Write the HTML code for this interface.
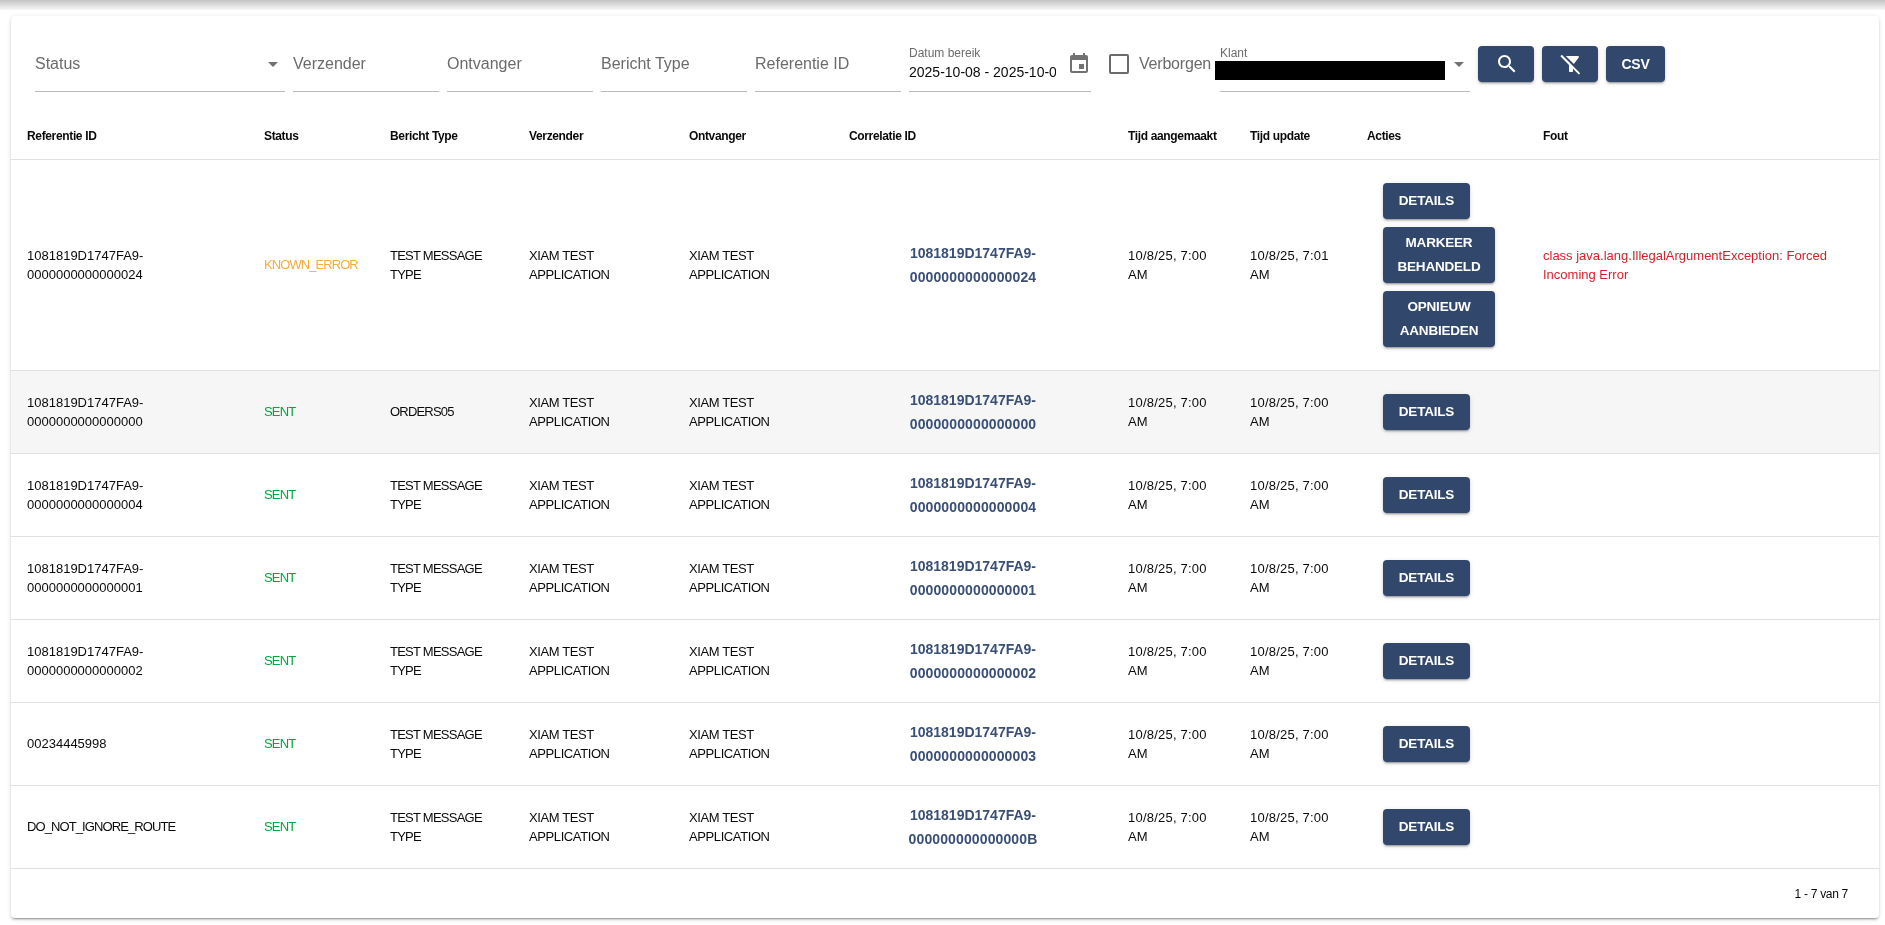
<!DOCTYPE html>
<html><head><meta charset="utf-8">
<style>
html,body{margin:0;padding:0;width:1885px;height:925px;overflow:hidden;background:#fff;font-family:"Liberation Sans",sans-serif;position:relative;}
#topsh{position:absolute;left:0;top:0;width:1885px;height:10px;background:linear-gradient(#c4c4c4,#f7f7f7);}
#card{position:absolute;left:11px;top:16px;width:1868px;height:902px;background:#fff;border-radius:4px;box-shadow:0 3px 1px -2px rgba(0,0,0,.2),0 2px 2px 0 rgba(0,0,0,.14),0 1px 5px 0 rgba(0,0,0,.12);}
.t{position:absolute;white-space:nowrap;will-change:transform;}
.row{position:absolute;left:11px;width:1868px;border-bottom:1px solid #e0e0e0;}
.hl{position:absolute;left:11px;width:1868px;height:1px;background:#e0e0e0;}
.ul{position:absolute;height:1px;background:#bababa;}
.btn{position:absolute;background:#32476c;border-radius:4px;box-shadow:0 3px 1px -2px rgba(0,0,0,.2),0 2px 2px 0 rgba(0,0,0,.14),0 1px 5px 0 rgba(0,0,0,.12);}
.ico{position:absolute;}
.arrow{position:absolute;width:0;height:0;border-left:5px solid transparent;border-right:5px solid transparent;border-top:5px solid #717171;}
.cb{position:absolute;width:16px;height:16px;border:2px solid #6b6b6b;border-radius:2px;}
</style></head><body>
<div id="topsh"></div>
<div id="card"></div>
<div class="row" style="top:160px;height:210px;background:transparent"></div>
<div class="t" style="left:27px;top:247.50px;font-size:13px;line-height:16px;color:#0a0a0a;font-weight:400;letter-spacing:0px;">1081819D1747FA9-</div>
<div class="t" style="left:27px;top:266.50px;font-size:13px;line-height:16px;color:#0a0a0a;font-weight:400;letter-spacing:0px;">0000000000000024</div>
<div class="t" style="left:264px;top:256.50px;font-size:13px;line-height:16px;color:#f5ac3d;font-weight:400;letter-spacing:-0.93px;">KNOWN_ERROR</div>
<div class="t" style="left:390px;top:247.50px;font-size:13px;line-height:16px;color:#0a0a0a;font-weight:400;letter-spacing:-0.75px;">TEST MESSAGE</div>
<div class="t" style="left:390px;top:266.50px;font-size:13px;line-height:16px;color:#0a0a0a;font-weight:400;letter-spacing:-0.75px;">TYPE</div>
<div class="t" style="left:529px;top:247.50px;font-size:13px;line-height:16px;color:#0a0a0a;font-weight:400;letter-spacing:-0.4px;">XIAM TEST</div>
<div class="t" style="left:529px;top:266.50px;font-size:13px;line-height:16px;color:#0a0a0a;font-weight:400;letter-spacing:-0.4px;">APPLICATION</div>
<div class="t" style="left:689px;top:247.50px;font-size:13px;line-height:16px;color:#0a0a0a;font-weight:400;letter-spacing:-0.4px;">XIAM TEST</div>
<div class="t" style="left:689px;top:266.50px;font-size:13px;line-height:16px;color:#0a0a0a;font-weight:400;letter-spacing:-0.4px;">APPLICATION</div>
<div class="t" style="left:872.5px;top:241.15px;font-size:14px;line-height:24px;color:#3a4f76;font-weight:700;letter-spacing:0px;width:200px;text-align:center;letter-spacing:0">1081819D1747FA9-</div>
<div class="t" style="left:872.5px;top:265.15px;font-size:14px;line-height:24px;color:#3a4f76;font-weight:700;letter-spacing:0px;width:200px;text-align:center;letter-spacing:0.12px">0000000000000024</div>
<div class="t" style="left:1127.5px;top:247.50px;font-size:13px;line-height:16px;color:#0a0a0a;font-weight:400;letter-spacing:0.22px;">10/8/25, 7:00</div>
<div class="t" style="left:1127.5px;top:266.50px;font-size:13px;line-height:16px;color:#0a0a0a;font-weight:400;letter-spacing:0px;">AM</div>
<div class="t" style="left:1249.5px;top:247.50px;font-size:13px;line-height:16px;color:#0a0a0a;font-weight:400;letter-spacing:0.22px;">10/8/25, 7:01</div>
<div class="t" style="left:1249.5px;top:266.50px;font-size:13px;line-height:16px;color:#0a0a0a;font-weight:400;letter-spacing:0px;">AM</div>
<div class="btn" style="left:1383px;top:183px;width:87px;height:36px;"></div>
<div class="t" style="left:1383px;top:191.32px;font-size:13.5px;line-height:20px;color:#fff;font-weight:700;letter-spacing:0px;width:87px;text-align:center;letter-spacing:-0.2px">DETAILS</div>
<div class="btn" style="left:1383px;top:227px;width:112px;height:56px;"></div>
<div class="t" style="left:1383px;top:233.32px;font-size:13.5px;line-height:20px;color:#fff;font-weight:700;letter-spacing:0px;width:112px;text-align:center;letter-spacing:-0.2px">MARKEER</div>
<div class="t" style="left:1383px;top:257.32px;font-size:13.5px;line-height:20px;color:#fff;font-weight:700;letter-spacing:0px;width:112px;text-align:center;letter-spacing:-0.2px">BEHANDELD</div>
<div class="btn" style="left:1383px;top:291px;width:112px;height:56px;"></div>
<div class="t" style="left:1383px;top:297.32px;font-size:13.5px;line-height:20px;color:#fff;font-weight:700;letter-spacing:0px;width:112px;text-align:center;letter-spacing:-0.2px">OPNIEUW</div>
<div class="t" style="left:1383px;top:321.32px;font-size:13.5px;line-height:20px;color:#fff;font-weight:700;letter-spacing:0px;width:112px;text-align:center;letter-spacing:-0.2px">AANBIEDEN</div>
<div class="t" style="left:1543px;top:247.50px;font-size:13px;line-height:16px;color:#d8202f;font-weight:400;letter-spacing:0px;">class java.lang.IllegalArgumentException: Forced</div>
<div class="t" style="left:1543px;top:266.50px;font-size:13px;line-height:16px;color:#d8202f;font-weight:400;letter-spacing:0px;">Incoming Error</div>
<div class="row" style="top:371px;height:82px;background:#f6f6f6"></div>
<div class="t" style="left:27px;top:394.50px;font-size:13px;line-height:16px;color:#0a0a0a;font-weight:400;letter-spacing:0px;">1081819D1747FA9-</div>
<div class="t" style="left:27px;top:413.50px;font-size:13px;line-height:16px;color:#0a0a0a;font-weight:400;letter-spacing:0px;">0000000000000000</div>
<div class="t" style="left:264px;top:403.50px;font-size:13px;line-height:16px;color:#00a83b;font-weight:400;letter-spacing:-0.8px;">SENT</div>
<div class="t" style="left:390px;top:403.50px;font-size:13px;line-height:16px;color:#0a0a0a;font-weight:400;letter-spacing:-0.8px;">ORDERS05</div>
<div class="t" style="left:529px;top:394.50px;font-size:13px;line-height:16px;color:#0a0a0a;font-weight:400;letter-spacing:-0.4px;">XIAM TEST</div>
<div class="t" style="left:529px;top:413.50px;font-size:13px;line-height:16px;color:#0a0a0a;font-weight:400;letter-spacing:-0.4px;">APPLICATION</div>
<div class="t" style="left:689px;top:394.50px;font-size:13px;line-height:16px;color:#0a0a0a;font-weight:400;letter-spacing:-0.4px;">XIAM TEST</div>
<div class="t" style="left:689px;top:413.50px;font-size:13px;line-height:16px;color:#0a0a0a;font-weight:400;letter-spacing:-0.4px;">APPLICATION</div>
<div class="t" style="left:872.5px;top:388.15px;font-size:14px;line-height:24px;color:#3a4f76;font-weight:700;letter-spacing:0px;width:200px;text-align:center;letter-spacing:0">1081819D1747FA9-</div>
<div class="t" style="left:872.5px;top:412.15px;font-size:14px;line-height:24px;color:#3a4f76;font-weight:700;letter-spacing:0px;width:200px;text-align:center;letter-spacing:0.12px">0000000000000000</div>
<div class="t" style="left:1127.5px;top:394.50px;font-size:13px;line-height:16px;color:#0a0a0a;font-weight:400;letter-spacing:0.22px;">10/8/25, 7:00</div>
<div class="t" style="left:1127.5px;top:413.50px;font-size:13px;line-height:16px;color:#0a0a0a;font-weight:400;letter-spacing:0px;">AM</div>
<div class="t" style="left:1249.5px;top:394.50px;font-size:13px;line-height:16px;color:#0a0a0a;font-weight:400;letter-spacing:0.22px;">10/8/25, 7:00</div>
<div class="t" style="left:1249.5px;top:413.50px;font-size:13px;line-height:16px;color:#0a0a0a;font-weight:400;letter-spacing:0px;">AM</div>
<div class="btn" style="left:1383px;top:394px;width:87px;height:36px;"></div>
<div class="t" style="left:1383px;top:402.32px;font-size:13.5px;line-height:20px;color:#fff;font-weight:700;letter-spacing:0px;width:87px;text-align:center;letter-spacing:-0.2px">DETAILS</div>
<div class="row" style="top:454px;height:82px;background:transparent"></div>
<div class="t" style="left:27px;top:477.50px;font-size:13px;line-height:16px;color:#0a0a0a;font-weight:400;letter-spacing:0px;">1081819D1747FA9-</div>
<div class="t" style="left:27px;top:496.50px;font-size:13px;line-height:16px;color:#0a0a0a;font-weight:400;letter-spacing:0px;">0000000000000004</div>
<div class="t" style="left:264px;top:486.50px;font-size:13px;line-height:16px;color:#00a83b;font-weight:400;letter-spacing:-0.8px;">SENT</div>
<div class="t" style="left:390px;top:477.50px;font-size:13px;line-height:16px;color:#0a0a0a;font-weight:400;letter-spacing:-0.75px;">TEST MESSAGE</div>
<div class="t" style="left:390px;top:496.50px;font-size:13px;line-height:16px;color:#0a0a0a;font-weight:400;letter-spacing:-0.75px;">TYPE</div>
<div class="t" style="left:529px;top:477.50px;font-size:13px;line-height:16px;color:#0a0a0a;font-weight:400;letter-spacing:-0.4px;">XIAM TEST</div>
<div class="t" style="left:529px;top:496.50px;font-size:13px;line-height:16px;color:#0a0a0a;font-weight:400;letter-spacing:-0.4px;">APPLICATION</div>
<div class="t" style="left:689px;top:477.50px;font-size:13px;line-height:16px;color:#0a0a0a;font-weight:400;letter-spacing:-0.4px;">XIAM TEST</div>
<div class="t" style="left:689px;top:496.50px;font-size:13px;line-height:16px;color:#0a0a0a;font-weight:400;letter-spacing:-0.4px;">APPLICATION</div>
<div class="t" style="left:872.5px;top:471.15px;font-size:14px;line-height:24px;color:#3a4f76;font-weight:700;letter-spacing:0px;width:200px;text-align:center;letter-spacing:0">1081819D1747FA9-</div>
<div class="t" style="left:872.5px;top:495.15px;font-size:14px;line-height:24px;color:#3a4f76;font-weight:700;letter-spacing:0px;width:200px;text-align:center;letter-spacing:0.12px">0000000000000004</div>
<div class="t" style="left:1127.5px;top:477.50px;font-size:13px;line-height:16px;color:#0a0a0a;font-weight:400;letter-spacing:0.22px;">10/8/25, 7:00</div>
<div class="t" style="left:1127.5px;top:496.50px;font-size:13px;line-height:16px;color:#0a0a0a;font-weight:400;letter-spacing:0px;">AM</div>
<div class="t" style="left:1249.5px;top:477.50px;font-size:13px;line-height:16px;color:#0a0a0a;font-weight:400;letter-spacing:0.22px;">10/8/25, 7:00</div>
<div class="t" style="left:1249.5px;top:496.50px;font-size:13px;line-height:16px;color:#0a0a0a;font-weight:400;letter-spacing:0px;">AM</div>
<div class="btn" style="left:1383px;top:477px;width:87px;height:36px;"></div>
<div class="t" style="left:1383px;top:485.32px;font-size:13.5px;line-height:20px;color:#fff;font-weight:700;letter-spacing:0px;width:87px;text-align:center;letter-spacing:-0.2px">DETAILS</div>
<div class="row" style="top:537px;height:82px;background:transparent"></div>
<div class="t" style="left:27px;top:560.50px;font-size:13px;line-height:16px;color:#0a0a0a;font-weight:400;letter-spacing:0px;">1081819D1747FA9-</div>
<div class="t" style="left:27px;top:579.50px;font-size:13px;line-height:16px;color:#0a0a0a;font-weight:400;letter-spacing:0px;">0000000000000001</div>
<div class="t" style="left:264px;top:569.50px;font-size:13px;line-height:16px;color:#00a83b;font-weight:400;letter-spacing:-0.8px;">SENT</div>
<div class="t" style="left:390px;top:560.50px;font-size:13px;line-height:16px;color:#0a0a0a;font-weight:400;letter-spacing:-0.75px;">TEST MESSAGE</div>
<div class="t" style="left:390px;top:579.50px;font-size:13px;line-height:16px;color:#0a0a0a;font-weight:400;letter-spacing:-0.75px;">TYPE</div>
<div class="t" style="left:529px;top:560.50px;font-size:13px;line-height:16px;color:#0a0a0a;font-weight:400;letter-spacing:-0.4px;">XIAM TEST</div>
<div class="t" style="left:529px;top:579.50px;font-size:13px;line-height:16px;color:#0a0a0a;font-weight:400;letter-spacing:-0.4px;">APPLICATION</div>
<div class="t" style="left:689px;top:560.50px;font-size:13px;line-height:16px;color:#0a0a0a;font-weight:400;letter-spacing:-0.4px;">XIAM TEST</div>
<div class="t" style="left:689px;top:579.50px;font-size:13px;line-height:16px;color:#0a0a0a;font-weight:400;letter-spacing:-0.4px;">APPLICATION</div>
<div class="t" style="left:872.5px;top:554.15px;font-size:14px;line-height:24px;color:#3a4f76;font-weight:700;letter-spacing:0px;width:200px;text-align:center;letter-spacing:0">1081819D1747FA9-</div>
<div class="t" style="left:872.5px;top:578.15px;font-size:14px;line-height:24px;color:#3a4f76;font-weight:700;letter-spacing:0px;width:200px;text-align:center;letter-spacing:0.12px">0000000000000001</div>
<div class="t" style="left:1127.5px;top:560.50px;font-size:13px;line-height:16px;color:#0a0a0a;font-weight:400;letter-spacing:0.22px;">10/8/25, 7:00</div>
<div class="t" style="left:1127.5px;top:579.50px;font-size:13px;line-height:16px;color:#0a0a0a;font-weight:400;letter-spacing:0px;">AM</div>
<div class="t" style="left:1249.5px;top:560.50px;font-size:13px;line-height:16px;color:#0a0a0a;font-weight:400;letter-spacing:0.22px;">10/8/25, 7:00</div>
<div class="t" style="left:1249.5px;top:579.50px;font-size:13px;line-height:16px;color:#0a0a0a;font-weight:400;letter-spacing:0px;">AM</div>
<div class="btn" style="left:1383px;top:560px;width:87px;height:36px;"></div>
<div class="t" style="left:1383px;top:568.32px;font-size:13.5px;line-height:20px;color:#fff;font-weight:700;letter-spacing:0px;width:87px;text-align:center;letter-spacing:-0.2px">DETAILS</div>
<div class="row" style="top:620px;height:82px;background:transparent"></div>
<div class="t" style="left:27px;top:643.50px;font-size:13px;line-height:16px;color:#0a0a0a;font-weight:400;letter-spacing:0px;">1081819D1747FA9-</div>
<div class="t" style="left:27px;top:662.50px;font-size:13px;line-height:16px;color:#0a0a0a;font-weight:400;letter-spacing:0px;">0000000000000002</div>
<div class="t" style="left:264px;top:652.50px;font-size:13px;line-height:16px;color:#00a83b;font-weight:400;letter-spacing:-0.8px;">SENT</div>
<div class="t" style="left:390px;top:643.50px;font-size:13px;line-height:16px;color:#0a0a0a;font-weight:400;letter-spacing:-0.75px;">TEST MESSAGE</div>
<div class="t" style="left:390px;top:662.50px;font-size:13px;line-height:16px;color:#0a0a0a;font-weight:400;letter-spacing:-0.75px;">TYPE</div>
<div class="t" style="left:529px;top:643.50px;font-size:13px;line-height:16px;color:#0a0a0a;font-weight:400;letter-spacing:-0.4px;">XIAM TEST</div>
<div class="t" style="left:529px;top:662.50px;font-size:13px;line-height:16px;color:#0a0a0a;font-weight:400;letter-spacing:-0.4px;">APPLICATION</div>
<div class="t" style="left:689px;top:643.50px;font-size:13px;line-height:16px;color:#0a0a0a;font-weight:400;letter-spacing:-0.4px;">XIAM TEST</div>
<div class="t" style="left:689px;top:662.50px;font-size:13px;line-height:16px;color:#0a0a0a;font-weight:400;letter-spacing:-0.4px;">APPLICATION</div>
<div class="t" style="left:872.5px;top:637.15px;font-size:14px;line-height:24px;color:#3a4f76;font-weight:700;letter-spacing:0px;width:200px;text-align:center;letter-spacing:0">1081819D1747FA9-</div>
<div class="t" style="left:872.5px;top:661.15px;font-size:14px;line-height:24px;color:#3a4f76;font-weight:700;letter-spacing:0px;width:200px;text-align:center;letter-spacing:0.12px">0000000000000002</div>
<div class="t" style="left:1127.5px;top:643.50px;font-size:13px;line-height:16px;color:#0a0a0a;font-weight:400;letter-spacing:0.22px;">10/8/25, 7:00</div>
<div class="t" style="left:1127.5px;top:662.50px;font-size:13px;line-height:16px;color:#0a0a0a;font-weight:400;letter-spacing:0px;">AM</div>
<div class="t" style="left:1249.5px;top:643.50px;font-size:13px;line-height:16px;color:#0a0a0a;font-weight:400;letter-spacing:0.22px;">10/8/25, 7:00</div>
<div class="t" style="left:1249.5px;top:662.50px;font-size:13px;line-height:16px;color:#0a0a0a;font-weight:400;letter-spacing:0px;">AM</div>
<div class="btn" style="left:1383px;top:643px;width:87px;height:36px;"></div>
<div class="t" style="left:1383px;top:651.32px;font-size:13.5px;line-height:20px;color:#fff;font-weight:700;letter-spacing:0px;width:87px;text-align:center;letter-spacing:-0.2px">DETAILS</div>
<div class="row" style="top:703px;height:82px;background:transparent"></div>
<div class="t" style="left:27px;top:735.50px;font-size:13px;line-height:16px;color:#0a0a0a;font-weight:400;letter-spacing:0px;">00234445998</div>
<div class="t" style="left:264px;top:735.50px;font-size:13px;line-height:16px;color:#00a83b;font-weight:400;letter-spacing:-0.8px;">SENT</div>
<div class="t" style="left:390px;top:726.50px;font-size:13px;line-height:16px;color:#0a0a0a;font-weight:400;letter-spacing:-0.75px;">TEST MESSAGE</div>
<div class="t" style="left:390px;top:745.50px;font-size:13px;line-height:16px;color:#0a0a0a;font-weight:400;letter-spacing:-0.75px;">TYPE</div>
<div class="t" style="left:529px;top:726.50px;font-size:13px;line-height:16px;color:#0a0a0a;font-weight:400;letter-spacing:-0.4px;">XIAM TEST</div>
<div class="t" style="left:529px;top:745.50px;font-size:13px;line-height:16px;color:#0a0a0a;font-weight:400;letter-spacing:-0.4px;">APPLICATION</div>
<div class="t" style="left:689px;top:726.50px;font-size:13px;line-height:16px;color:#0a0a0a;font-weight:400;letter-spacing:-0.4px;">XIAM TEST</div>
<div class="t" style="left:689px;top:745.50px;font-size:13px;line-height:16px;color:#0a0a0a;font-weight:400;letter-spacing:-0.4px;">APPLICATION</div>
<div class="t" style="left:872.5px;top:720.15px;font-size:14px;line-height:24px;color:#3a4f76;font-weight:700;letter-spacing:0px;width:200px;text-align:center;letter-spacing:0">1081819D1747FA9-</div>
<div class="t" style="left:872.5px;top:744.15px;font-size:14px;line-height:24px;color:#3a4f76;font-weight:700;letter-spacing:0px;width:200px;text-align:center;letter-spacing:0.12px">0000000000000003</div>
<div class="t" style="left:1127.5px;top:726.50px;font-size:13px;line-height:16px;color:#0a0a0a;font-weight:400;letter-spacing:0.22px;">10/8/25, 7:00</div>
<div class="t" style="left:1127.5px;top:745.50px;font-size:13px;line-height:16px;color:#0a0a0a;font-weight:400;letter-spacing:0px;">AM</div>
<div class="t" style="left:1249.5px;top:726.50px;font-size:13px;line-height:16px;color:#0a0a0a;font-weight:400;letter-spacing:0.22px;">10/8/25, 7:00</div>
<div class="t" style="left:1249.5px;top:745.50px;font-size:13px;line-height:16px;color:#0a0a0a;font-weight:400;letter-spacing:0px;">AM</div>
<div class="btn" style="left:1383px;top:726px;width:87px;height:36px;"></div>
<div class="t" style="left:1383px;top:734.32px;font-size:13.5px;line-height:20px;color:#fff;font-weight:700;letter-spacing:0px;width:87px;text-align:center;letter-spacing:-0.2px">DETAILS</div>
<div class="row" style="top:786px;height:82px;background:transparent"></div>
<div class="t" style="left:27px;top:818.50px;font-size:13px;line-height:16px;color:#0a0a0a;font-weight:400;letter-spacing:-0.9px;">DO_NOT_IGNORE_ROUTE</div>
<div class="t" style="left:264px;top:818.50px;font-size:13px;line-height:16px;color:#00a83b;font-weight:400;letter-spacing:-0.8px;">SENT</div>
<div class="t" style="left:390px;top:809.50px;font-size:13px;line-height:16px;color:#0a0a0a;font-weight:400;letter-spacing:-0.75px;">TEST MESSAGE</div>
<div class="t" style="left:390px;top:828.50px;font-size:13px;line-height:16px;color:#0a0a0a;font-weight:400;letter-spacing:-0.75px;">TYPE</div>
<div class="t" style="left:529px;top:809.50px;font-size:13px;line-height:16px;color:#0a0a0a;font-weight:400;letter-spacing:-0.4px;">XIAM TEST</div>
<div class="t" style="left:529px;top:828.50px;font-size:13px;line-height:16px;color:#0a0a0a;font-weight:400;letter-spacing:-0.4px;">APPLICATION</div>
<div class="t" style="left:689px;top:809.50px;font-size:13px;line-height:16px;color:#0a0a0a;font-weight:400;letter-spacing:-0.4px;">XIAM TEST</div>
<div class="t" style="left:689px;top:828.50px;font-size:13px;line-height:16px;color:#0a0a0a;font-weight:400;letter-spacing:-0.4px;">APPLICATION</div>
<div class="t" style="left:872.5px;top:803.15px;font-size:14px;line-height:24px;color:#3a4f76;font-weight:700;letter-spacing:0px;width:200px;text-align:center;letter-spacing:0">1081819D1747FA9-</div>
<div class="t" style="left:872.5px;top:827.15px;font-size:14px;line-height:24px;color:#3a4f76;font-weight:700;letter-spacing:0px;width:200px;text-align:center;letter-spacing:0.12px">000000000000000B</div>
<div class="t" style="left:1127.5px;top:809.50px;font-size:13px;line-height:16px;color:#0a0a0a;font-weight:400;letter-spacing:0.22px;">10/8/25, 7:00</div>
<div class="t" style="left:1127.5px;top:828.50px;font-size:13px;line-height:16px;color:#0a0a0a;font-weight:400;letter-spacing:0px;">AM</div>
<div class="t" style="left:1249.5px;top:809.50px;font-size:13px;line-height:16px;color:#0a0a0a;font-weight:400;letter-spacing:0.22px;">10/8/25, 7:00</div>
<div class="t" style="left:1249.5px;top:828.50px;font-size:13px;line-height:16px;color:#0a0a0a;font-weight:400;letter-spacing:0px;">AM</div>
<div class="btn" style="left:1383px;top:809px;width:87px;height:36px;"></div>
<div class="t" style="left:1383px;top:817.32px;font-size:13.5px;line-height:20px;color:#fff;font-weight:700;letter-spacing:0px;width:87px;text-align:center;letter-spacing:-0.2px">DETAILS</div>
<div class="t" style="left:27px;top:128.84px;font-size:12px;line-height:14px;color:#0a0a0a;font-weight:700;letter-spacing:-0.35px;">Referentie ID</div>
<div class="t" style="left:264px;top:128.84px;font-size:12px;line-height:14px;color:#0a0a0a;font-weight:700;letter-spacing:-0.35px;">Status</div>
<div class="t" style="left:390px;top:128.84px;font-size:12px;line-height:14px;color:#0a0a0a;font-weight:700;letter-spacing:-0.35px;">Bericht Type</div>
<div class="t" style="left:529px;top:128.84px;font-size:12px;line-height:14px;color:#0a0a0a;font-weight:700;letter-spacing:-0.35px;">Verzender</div>
<div class="t" style="left:689px;top:128.84px;font-size:12px;line-height:14px;color:#0a0a0a;font-weight:700;letter-spacing:-0.35px;">Ontvanger</div>
<div class="t" style="left:849px;top:128.84px;font-size:12px;line-height:14px;color:#0a0a0a;font-weight:700;letter-spacing:-0.35px;">Correlatie ID</div>
<div class="t" style="left:1128px;top:128.84px;font-size:12px;line-height:14px;color:#0a0a0a;font-weight:700;letter-spacing:-0.35px;">Tijd aangemaakt</div>
<div class="t" style="left:1250px;top:128.84px;font-size:12px;line-height:14px;color:#0a0a0a;font-weight:700;letter-spacing:-0.35px;">Tijd update</div>
<div class="t" style="left:1367px;top:128.84px;font-size:12px;line-height:14px;color:#0a0a0a;font-weight:700;letter-spacing:-0.35px;">Acties</div>
<div class="t" style="left:1543px;top:128.84px;font-size:12px;line-height:14px;color:#0a0a0a;font-weight:700;letter-spacing:-0.35px;">Fout</div>
<div class="hl" style="top:159px"></div>
<div class="ul" style="left:35px;top:91px;width:250px"></div>
<div class="t" style="left:35px;top:54.46px;font-size:16px;line-height:20px;color:#6b6b6b;font-weight:400;letter-spacing:0px;">Status</div>
<div class="ul" style="left:293px;top:91px;width:146px"></div>
<div class="t" style="left:293px;top:54.46px;font-size:16px;line-height:20px;color:#6b6b6b;font-weight:400;letter-spacing:0px;">Verzender</div>
<div class="ul" style="left:447px;top:91px;width:146px"></div>
<div class="t" style="left:447px;top:54.46px;font-size:16px;line-height:20px;color:#6b6b6b;font-weight:400;letter-spacing:0px;">Ontvanger</div>
<div class="ul" style="left:601px;top:91px;width:146px"></div>
<div class="t" style="left:601px;top:54.46px;font-size:16px;line-height:20px;color:#6b6b6b;font-weight:400;letter-spacing:0px;">Bericht Type</div>
<div class="ul" style="left:755px;top:91px;width:146px"></div>
<div class="t" style="left:755px;top:54.46px;font-size:16px;line-height:20px;color:#6b6b6b;font-weight:400;letter-spacing:0px;">Referentie ID</div>
<div class="arrow" style="left:268px;top:62px"></div>
<div class="ul" style="left:909px;top:91px;width:182px"></div>
<div class="t" style="left:909px;top:45.84px;font-size:12px;line-height:14px;color:#6b6b6b;font-weight:400;letter-spacing:0px;">Datum bereik</div>
<div class="t" style="left:909px;top:63.15px;font-size:14px;line-height:18px;color:#0a0a0a;font-weight:400;letter-spacing:0px;width:147px;overflow:hidden;">2025-10-08 - 2025-10-0</div>
<svg class="ico" style="left:1067px;top:52px" width="24" height="24" viewBox="0 0 24 24"><path fill="#717171" d="M17 12h-5v5h5v-5zM16 1v2H8V1H6v2H5c-1.11 0-1.99.9-1.99 2L3 19c0 1.1.89 2 2 2h14c1.1 0 2-.9 2-2V5c0-1.1-.9-2-2-2h-1V1h-2zm3 18H5V8h14v11z"/></svg>
<div class="cb" style="left:1109px;top:54px"></div>
<div class="t" style="left:1139px;top:54.46px;font-size:16px;line-height:20px;color:#6b6b6b;font-weight:400;letter-spacing:-0.2px;">Verborgen</div>
<div class="ul" style="left:1220px;top:91px;width:250px"></div>
<div class="t" style="left:1220px;top:45.84px;font-size:12px;line-height:14px;color:#6b6b6b;font-weight:400;letter-spacing:0px;">Klant</div>
<div style="position:absolute;left:1215px;top:61px;width:230px;height:19px;background:#000"></div>
<div class="arrow" style="left:1454px;top:62px"></div>
<div class="btn" style="left:1478px;top:46px;width:56px;height:36px;"></div>
<svg class="ico" style="left:1494.6px;top:52px" width="24" height="24" viewBox="0 0 24 24"><path fill="#fff" d="M15.5 14h-.79l-.28-.27C15.41 12.59 16 11.11 16 9.5 16 5.91 13.09 3 9.5 3S3 5.91 3 9.5 5.91 16 9.5 16c1.61 0 3.09-.59 4.23-1.57l.27.28v.79l5 4.99L20.49 19l-4.99-5zm-6 0C7.01 14 5 11.99 5 9.5S7.01 5 9.5 5 14 7.01 14 9.5 11.99 14 9.5 14z"/></svg>
<div class="btn" style="left:1542px;top:46px;width:56px;height:36px;"></div>
<svg class="ico" style="left:1558.6px;top:52px" width="24" height="24" viewBox="0 0 24 24"><path fill="#fff" d="M19.79 5.61C20.3 4.95 19.83 4 19 4H6.83l7.97 7.97 4.99-6.36zM2.81 2.81 1.39 4.22 10 13v6c0 .55.45 1 1 1h2c.55 0 1-.45 1-1v-2.17l5.78 5.78 1.41-1.41L2.81 2.81z"/></svg>
<div class="btn" style="left:1606px;top:46px;width:59px;height:36px;"></div>
<div class="t" style="left:1606px;top:54.15px;font-size:14px;line-height:20px;color:#fff;font-weight:700;letter-spacing:0px;width:59px;text-align:center;letter-spacing:-0.2px">CSV</div>
<div class="t" style="left:1748px;top:886.84px;font-size:12px;line-height:14px;color:#0a0a0a;font-weight:400;letter-spacing:0px;width:100px;text-align:right;letter-spacing:-0.3px">1 - 7 van 7</div>
</body></html>
